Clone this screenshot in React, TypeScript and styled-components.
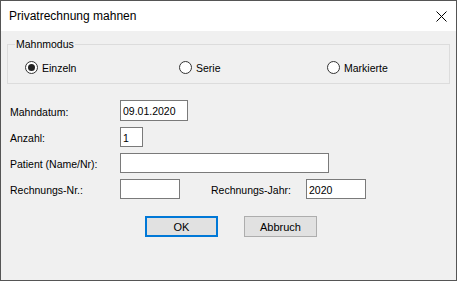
import styled, { createGlobalStyle } from "styled-components";

const GlobalStyle = createGlobalStyle`
    body {
        margin: 0;
        background: #ffffff;
    }
`;

const Window = styled.div`
    width: 457px;
    height: 281px;
    box-sizing: border-box;
    border: 1px solid #555555;
    display: flex;
    flex-direction: column;
    font-family: "Liberation Sans", Arial, sans-serif;
    color: #000000;
`;

const TitleBar = styled.div`
    height: 30px;
    flex: none;
    background: #ffffff;
    display: flex;
    align-items: center;
    justify-content: space-between;
    padding-left: 8px;
`;

const Title = styled.span`
    font-size: 12px;
`;

const CloseButton = styled.div`
    width: 30px;
    height: 30px;
    display: flex;
    align-items: center;
    justify-content: center;
`;

const Body = styled.div`
    flex: 1;
    background: #f0f0f0;
    padding-top: 13px;
    font-size: 10.5px;
`;

const Group = styled.div`
    position: relative;
    margin: 0 6px;
    height: 40px;
    box-sizing: border-box;
    border: 1px solid #dcdcdc;
    padding: 7px 0 0 17px;
    display: grid;
    grid-template-columns: 154px 148px auto;
    align-items: center;
`;

const Legend = styled.span`
    position: absolute;
    top: -7px;
    left: 7px;
    padding: 0 1px;
    line-height: 12px;
    background: #f0f0f0;
`;

const RadioOption = styled.label`
    display: flex;
    align-items: center;
    gap: 4px;
`;

const RadioDot = styled.span<{ $checked?: boolean }>`
    width: 13px;
    height: 13px;
    box-sizing: border-box;
    border: 1px solid #333333;
    border-radius: 50%;
    background: #ffffff;
    display: flex;
    align-items: center;
    justify-content: center;

    &::after {
        content: "";
        display: ${(p) => (p.$checked ? "block" : "none")};
        width: 7px;
        height: 7px;
        border-radius: 50%;
        background: #222222;
    }
`;

const Form = styled.div`
    margin-top: 16px;
    padding-left: 9px;
    display: flex;
    flex-direction: column;
    gap: 6px;
`;

const Row = styled.div`
    display: flex;
    align-items: center;
`;

const Label = styled.span<{ $width: number; $gap?: number }>`
    width: ${(p) => p.$width}px;
    margin-left: ${(p) => p.$gap ?? 0}px;
    padding-top: 2px;
    flex: none;
`;

const Field = styled.input<{ $width: number; $height?: number }>`
    width: ${(p) => p.$width}px;
    height: ${(p) => p.$height ?? 20}px;
    box-sizing: border-box;
    margin: 0;
    border: 1px solid #7a7a7a;
    background: #ffffff;
    padding: 1px 2px 0;
    font-family: "Liberation Sans", Arial, sans-serif;
    font-size: 10.5px;
    color: #000000;
    outline: none;
`;

const ButtonRow = styled.div`
    margin-top: 17px;
    padding-left: 144px;
    display: flex;
    gap: 26px;
`;

const Button = styled.button<{ $default?: boolean }>`
    width: 73px;
    height: 21px;
    box-sizing: border-box;
    margin: 0;
    padding: 0;
    background: #e1e1e1;
    border: ${(p) => (p.$default ? "2px solid #0078d7" : "1px solid #adadad")};
    font-family: "Liberation Sans", Arial, sans-serif;
    font-size: 11px;
    color: #000000;
`;

export default function App() {
    return (
        <>
            <GlobalStyle />
            <Window>
                <TitleBar>
                    <Title>Privatrechnung mahnen</Title>
                    <CloseButton>
                        <svg width="11" height="11" viewBox="0 0 11 11">
                            <path d="M0.5 0.5 L10.5 10.5 M10.5 0.5 L0.5 10.5" stroke="#000" strokeWidth="1" />
                        </svg>
                    </CloseButton>
                </TitleBar>
                <Body>
                    <Group>
                        <Legend>Mahnmodus</Legend>
                        <RadioOption>
                            <RadioDot $checked />
                            Einzeln
                        </RadioOption>
                        <RadioOption>
                            <RadioDot />
                            Serie
                        </RadioOption>
                        <RadioOption>
                            <RadioDot />
                            Markierte
                        </RadioOption>
                    </Group>

                    <Form>
                        <Row>
                            <Label $width={110}>Mahndatum:</Label>
                            <Field $width={68} $height={21} defaultValue="09.01.2020" />
                        </Row>
                        <Row>
                            <Label $width={110}>Anzahl:</Label>
                            <Field $width={23} defaultValue="1" />
                        </Row>
                        <Row>
                            <Label $width={110}>Patient (Name/Nr):</Label>
                            <Field $width={209} defaultValue="" />
                        </Row>
                        <Row>
                            <Label $width={110}>Rechnungs-Nr.:</Label>
                            <Field $width={60} defaultValue="" />
                            <Label $width={95} $gap={31}>Rechnungs-Jahr:</Label>
                            <Field $width={60} defaultValue="2020" />
                        </Row>
                    </Form>

                    <ButtonRow>
                        <Button $default>OK</Button>
                        <Button>Abbruch</Button>
                    </ButtonRow>
                </Body>
            </Window>
        </>
    );
}
